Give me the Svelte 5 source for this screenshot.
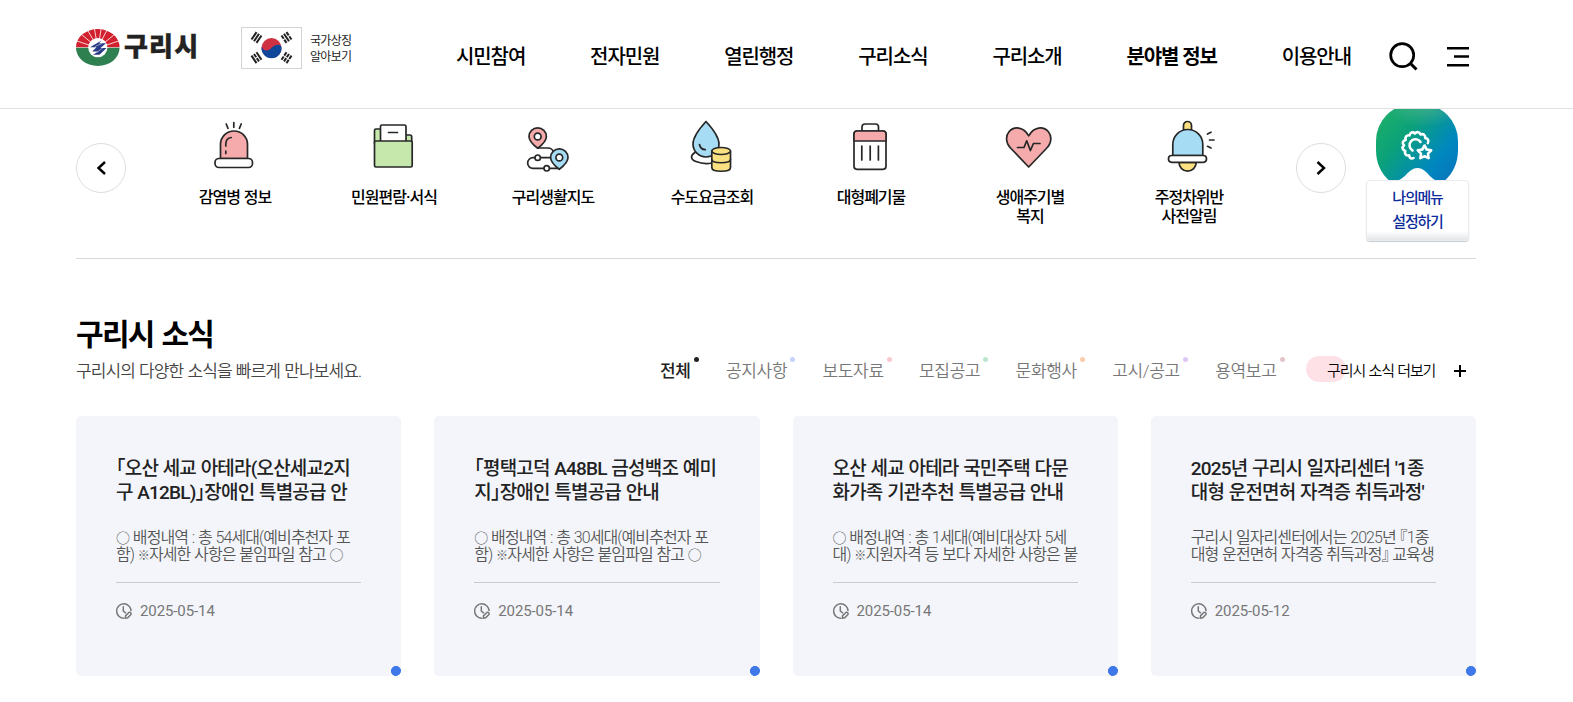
<script>
	const navItems = [
		{ label: '시민참여' },
		{ label: '전자민원' },
		{ label: '열린행정' },
		{ label: '구리소식' },
		{ label: '구리소개' },
		{ label: '분야별 정보', active: true },
		{ label: '이용안내' }
	];

	const shortcuts = [
		{ icon: 'siren', lines: ['감염병 정보'] },
		{ icon: 'folder', lines: ['민원편람·서식'] },
		{ icon: 'map', lines: ['구리생활지도'] },
		{ icon: 'water', lines: ['수도요금조회'] },
		{ icon: 'trash', lines: ['대형폐기물'] },
		{ icon: 'heart', lines: ['생애주기별', '복지'] },
		{ icon: 'bell', lines: ['주정차위반', '사전알림'] }
	];

	const tabs = [
		{ label: '전체', color: '#222222' },
		{ label: '공지사항', color: '#c5d3fb' },
		{ label: '보도자료', color: '#fac8d0' },
		{ label: '모집공고', color: '#b9e6cf' },
		{ label: '문화행사', color: '#fbcbad' },
		{ label: '고시/공고', color: '#dfc6f8' },
		{ label: '용역보고', color: '#e3c5c9' }
	];

	const news = [
		{
			title: ['「오산 세교 아테라(오산세교2지', '구 A12BL)」장애인 특별공급 안'],
			text: ['○ 배정내역 : 총 54세대(예비추천자 포', '함) ※자세한 사항은 붙임파일 참고 ○'],
			date: '2025-05-14'
		},
		{
			title: ['「평택고덕 A48BL 금성백조 예미', '지」장애인 특별공급 안내'],
			text: ['○ 배정내역 : 총 30세대(예비추천자 포', '함) ※자세한 사항은 붙임파일 참고 ○'],
			date: '2025-05-14'
		},
		{
			title: ['오산 세교 아테라 국민주택 다문', '화가족 기관추천 특별공급 안내'],
			text: ['○ 배정내역 : 총 1세대(예비대상자 5세', '대) ※지원자격 등 보다 자세한 사항은 붙'],
			date: '2025-05-14'
		},
		{
			title: ["2025년 구리시 일자리센터 '1종", "대형 운전면허 자격증 취득과정'"],
			text: ['구리시 일자리센터에서는 2025년 『1종', '대형 운전면허 자격증 취득과정』 교육생'],
			date: '2025-05-12'
		}
	];

	let current = $state('전체');

	// full-width marks are set smaller than the text around them
	function splitMarks(line) {
		return line.split(/([○※])/).filter(Boolean);
	}
</script>

<header class="header">
	<div class="inner header-inner">
		<a class="logo" href="#top">
			<svg width="44" height="38" viewBox="0 0 44 38">
				<path d="M0 18.200a21.800 18.200 0 0 1 43.600 0z" fill="#d3202f" />
				<path d="M0 18.800a21.800 18.200 0 0 0 43.600 0z" fill="#2f8050" />
				<path
					d="M21.800 19 1 12M21.800 19 5.500 5.500M21.800 19 11.500 1M21.800 19 18.300-1M21.800 19 25.300-1M21.800 19 32-1M21.800 19 38.500 5.500M21.800 19 42.600 12"
					stroke="#fff"
					stroke-width="0.800"
				/>
				<circle cx="21.800" cy="18.600" r="9.600" fill="#fff" />
				<path d="M25.500 11.500 14 18.200h6.500l-4.300 4.200h6L17 25.800h6.500l7-6.800h-6l5.500-4.800h-7z" fill="#273a86" />
				<path d="m19 17.500 7-3M21 23.300l6-4.500" fill="none" stroke="#fff" stroke-width="0.500" />
			</svg>
			<span>구리시</span>
		</a>
		<a class="symbol" href="#symbol">
			<span class="flag">
				<svg width="59" height="40" viewBox="0 0 59 40">
					<circle cx="29.500" cy="20" r="10" fill="#cf3140" />
					<path d="M19.700 18.500c1.500 4.500 6 5.500 9.800 1.500s8-4 9.900-1.500A10 10 0 1 1 19.700 18.500z" fill="#10469a" />
					<g stroke="#222" stroke-width="2">
						<g transform="translate(14.500 9.500) rotate(-56)"><path d="M-4.500-3H4.500M-4.500 0H4.500M-4.500 3H4.500" /></g>
						<g transform="translate(44.500 9.500) rotate(56)"><path d="M-4.500-3h4M.5-3h4M-4.500 0h9M-4.500 3h4M.5 3h4" /></g>
						<g transform="translate(14.500 29.700) rotate(56)"><path d="M-4.500-3h9M-4.500 0h4M.5 0h4M-4.500 3h9" /></g>
						<g transform="translate(44.500 29.700) rotate(-56)"><path d="M-4.500-3h4M.5-3h4M-4.500 0h4M.5 0h4M-4.500 3h4M.5 3h4" /></g>
					</g>
				</svg>
			</span>
			<span class="symbol-text">국가상징<br />알아보기</span>
		</a>
		<nav class="nav">
			{#each navItems as item}
				<a href="#nav" class:active={item.active}>{item.label}</a>
			{/each}
		</nav>
		<button class="icon-button search" aria-label="검색">
			<svg width="30" height="30" viewBox="0 0 30 30" fill="none" stroke="#000" stroke-width="2.700">
				<circle cx="13.200" cy="13.200" r="11.500" />
				<path d="m21 21 6.500 6.500" stroke-width="3" />
			</svg>
		</button>
		<button class="icon-button menu" aria-label="전체메뉴">
			<svg width="22" height="20" viewBox="0 0 22 20" stroke="#000" stroke-width="2.400">
				<path d="M0 1.200h22M7 9.500h15M0 18.200h22" />
			</svg>
		</button>
	</div>
</header>

<section class="inner shortcuts">
	<button class="arrow" aria-label="이전">
		<svg width="14" height="16" viewBox="0 0 14 16"><path d="m11 2-6.500 6 6.500 6" /></svg>
	</button>
	<ul class="shortcut-list">
		{#each shortcuts as item}
			<li>
				<svg class="shortcut-icon" width="60" height="60" viewBox="0 0 60 60">
					{#if item.icon === 'siren'}
						<path d="M16.500 42.500V28.500a13.500 13.500 0 0 1 27 0v14z" fill="#f5abab" />
						<rect x="11" y="42.500" width="37.500" height="9" rx="4" fill="#fff" />
						<path d="M21.800 30v-2c0-3.500 2.200-6 5.500-6.500" fill="none" />
						<path d="M21.800 35v2.500M22.200 8l1.800 4.300M29.800 6.500v4.700M37.200 8l-1.800 4.300" />
					{:else if item.icon === 'folder'}
						<path d="M11.500 27V14.500q0-1.500 1.500-1.500h5v14zM42 27v-8h5q1.700 0 1.700 1.700V27z" fill="#c6e8ad" />
						<path d="M17.500 25V10.500q0-1.500 1.500-1.500h22.500q1.500 0 1.500 1.500V25" fill="#fff" />
						<rect x="11.500" y="25" width="37.700" height="26" rx="1.500" fill="#c6e8ad" />
						<path d="M25.500 16.500h9" />
					{:else if item.icon === 'map'}
						<path d="M15.700 32H26q4 0 5.500 4M29 41.700H11a5.300 5.300 0 0 0 0 10.700h26" fill="none" />
						<path d="M15.700 32.200C10 28 7 24.500 7 20.500a8.700 8.700 0 0 1 17.400 0c0 4-3 7.500-8.700 11.700z" fill="#f5abab" />
						<path d="M37.300 53.300c-5.700-4.200-8.700-7.700-8.700-11.700a8.700 8.700 0 0 1 17.400 0c0 4-3 7.500-8.700 11.700z" fill="#a6dcf4" />
						<circle cx="15.700" cy="20.500" r="3.400" fill="#fff" />
						<circle cx="37.300" cy="41.500" r="3.400" fill="#fff" />
						<circle cx="15.700" cy="41.700" r="2.700" fill="#fff" />
						<circle cx="24.700" cy="52.300" r="2.700" fill="#fff" />
					{:else if item.icon === 'water'}
						<path d="M14 36.500c-5 3-4.500 7 1 9 5 2 11 2.500 16 1.500" fill="#fff" />
						<path d="M25 5.500C19 12 12 20 12 28a13 13 0 0 0 26 0c0-8-7-16-13-22.500z" fill="#a6dcf4" />
						<path d="M30.800 35v16.500c0 5 18.700 5 18.700 0V35z" fill="#fce182" />
						<ellipse cx="40.150" cy="35" rx="9.350" ry="3.500" fill="#fce182" />
						<path d="M30.800 43.500c0 4.300 18.700 4.300 18.700 0" fill="none" />
						<path d="M18.500 28.500c.5 3 2.500 5 5.800 5.200" fill="none" />
					{:else if item.icon === 'trash'}
						<path d="M22 15v-4q0-3 3-3h10.500q3 0 3 3v4" fill="#fff" />
						<rect x="14" y="15" width="32" height="38.300" rx="3" fill="#fff" />
						<path d="M14 25v-7q0-3 3-3h26q3 0 3 3v7z" fill="#f5abab" />
						<path d="M21.800 30v14M30.200 30v14M38.400 30v14" />
					{:else if item.icon === 'heart'}
						<path d="M29.700 51 12 32.500C6.500 27 6.500 20 10 15.800c5-6 14.500-5.300 19.700 4 5.200-9.300 14.700-10 19.700-4 3.500 4.200 3.500 11.200-2 16.700z" fill="#f5abab" />
						<path d="M18.500 31.500H25l2.700-6.700 3.700 9.700 3-7H41" fill="none" />
					{:else}
						<path d="M25.500 14V9.500a4 4 0 0 1 8 0V14z" fill="#fce182" />
						<path d="M21 46.500a8.600 8.600 0 0 0 17.200 0z" fill="#fce182" />
						<path d="M14.800 39.500V28.500a15 15 0 0 1 30 0v11z" fill="#a6dcf4" />
						<rect x="10.500" y="39.500" width="38" height="6.800" rx="3.200" fill="#fff" />
						<path d="m49.500 18 3.500-1.800M51.500 24H56M49.500 30.300l3.500 1.800" />
					{/if}
				</svg>
				<span>{item.lines[0]}{#if item.lines[1]}<br />{item.lines[1]}{/if}</span>
			</li>
		{/each}
	</ul>
	<button class="arrow next" aria-label="다음">
		<svg width="14" height="16" viewBox="0 0 14 16"><path d="m3.500 2 6.500 6-6.500 6" /></svg>
	</button>
	<a class="my-menu" href="#mymenu">
		<svg class="blob" width="82" height="77" viewBox="0 0 82 77">
			<defs>
				<linearGradient id="blob-fill" x1="0" y1="0.100" x2="1" y2="0.850">
					<stop offset="0" stop-color="#1fb168" />
					<stop offset="0.350" stop-color="#0ca278" />
					<stop offset="0.780" stop-color="#0087bf" />
					<stop offset="1" stop-color="#0877bd" />
				</linearGradient>
				<radialGradient id="blob-shine" cx="0.600" cy="0" r="0.500">
					<stop offset="0" stop-color="#63b59a" stop-opacity="0.600" />
					<stop offset="1" stop-color="#63b59a" stop-opacity="0" />
				</radialGradient>
			</defs>
			<path d="M0 37A37 37 0 0 1 37 0h8a37 37 0 0 1 37 37v9c0 13-5 23-13 30.500H62c-8 0-11-12.500-20.500-12.500S29 76.500 20 76.500h-7C5 69 0 59 0 46z" fill="url(#blob-fill)" />
			<path d="M0 37A37 37 0 0 1 37 0h8a37 37 0 0 1 37 37v9H0z" fill="url(#blob-shine)" />
			<g fill="none" stroke="#fff" stroke-width="2.600" stroke-linecap="round" stroke-linejoin="round">
				<path d="M37.500 54c-2 1.200-4.200 0-4.400-2.600-3.200.6-5-1.700-3.800-4.500-3-.8-3.700-3.600-1.300-5.500-2.200-2.200-1.300-4.900 1.700-5.500-1-2.900.9-5 3.900-4.500.4-3 3.200-3.900 5.300-1.900 1.900-2.300 4.900-1.600 5.600 1 2.900-1.200 5 .6 4.800 3.600 2.800.3 3.900 2.600 2.500 5" />
				<path d="M36.500 46.500a6 6 0 1 1 8-8.500" />
				<path d="m48.500 41.500 2.200 4 4.500.8-3.200 3.300.6 4.600-4.100-2-4.100 2 .6-4.600-3.200-3.300 4.500-.8z" />
			</g>
		</svg>
		<span class="my-menu-text">나의메뉴<br />설정하기</span>
	</a>
</section>

<section class="inner news">
	<h2>구리시 소식</h2>
	<div class="news-head">
		<p>구리시의 다양한 소식을 빠르게 만나보세요.</p>
		<div class="tabs">
			{#each tabs as tab}
				<button class:on={current === tab.label} onclick={() => (current = tab.label)}>
					{tab.label}
					<i style="background: {tab.color}"></i>
				</button>
			{/each}
		</div>
		<a class="more" href="#more">
			<span>구리시 소식 더보기</span>
			<svg width="12" height="12" viewBox="0 0 12 12"><path d="M0 6h12M6 0v12" stroke="#000" stroke-width="2" /></svg>
		</a>
	</div>
	<div class="cards">
		{#each news as item}
			<article class="card">
				<h3>{item.title[0]}<br />{item.title[1]}</h3>
				<div class="summary">
					{#each item.text as line}
						<p>{#each splitMarks(line) as part}<span class:circle={part === '○'} class:note={part === '※'}>{part}</span>{/each}</p>
					{/each}
				</div>
				<div class="date">
					<svg width="16" height="16" viewBox="0 0 16 16" fill="none" stroke="#777" stroke-width="1.500" stroke-linecap="round">
						<path d="M7.500 15.200A7.200 7.200 0 1 1 15 7.600M7.300 3.800V8l2.200 1.800" />
						<path d="m9.300 15.200.3-2.500 3-3q1-.8 2 .1t.1 2l-3 3z" />
					</svg>
					<span>{item.date}</span>
				</div>
			</article>
		{/each}
	</div>
</section>

<style>
	:global(body) {
		margin: 0;
		background: #fff;
		color: #000;
		font-family: Roboto, 'Noto Sans CJK KR', sans-serif;
		overflow: hidden;
	}

	a {
		color: inherit;
		text-decoration: none;
	}

	button {
		padding: 0;
		border: 0;
		background: none;
		font-family: inherit;
		cursor: pointer;
	}

	svg {
		display: block;
		flex: none;
	}

	.inner {
		width: 1400px;
		margin-left: 76px;
		box-sizing: border-box;
	}

	.header {
		height: 108px;
		border-bottom: 1px solid #e1e1e1;
	}

	.header-inner {
		display: flex;
		align-items: flex-start;
		white-space: nowrap;
	}

	.logo {
		display: flex;
		width: 165px;
		padding-top: 28.500px;
	}

	.logo span {
		margin: 0 0 0 4px;
		font-size: 26px;
		font-weight: 900;
		line-height: 37px;
		letter-spacing: 1.200px;
		color: #222;
		-webkit-text-stroke: 0.400px #222;
	}

	.symbol {
		display: flex;
		width: 140px;
		padding-top: 27px;
	}

	.flag {
		height: 40px;
		border: 1px solid #d3d3d3;
	}

	.symbol-text {
		margin: 6px 0 0 8px;
		font-size: 12px;
		line-height: 16px;
		letter-spacing: -0.700px;
		color: #222;
	}

	.nav {
		display: flex;
		justify-content: space-between;
		width: 895px;
		margin: 0 0 0 75px;
		padding-top: 42px;
		font-size: 20px;
		font-weight: 500;
		line-height: 30px;
		letter-spacing: -1.100px;
	}

	.nav .active {
		font-weight: 700;
	}

	.search {
		margin: 42px 0 0 38px;
	}

	.menu {
		margin: 47px 0 0 28px;
	}

	.shortcuts {
		display: flex;
		align-items: flex-start;
		height: 150px;
		border-bottom: 1px solid #d9d9d9;
		overflow: hidden;
	}

	.arrow {
		display: flex;
		align-items: center;
		justify-content: center;
		flex: none;
		width: 50px;
		height: 50px;
		margin-top: 34px;
		border: 1px solid #ddd;
		border-radius: 50%;
	}

	.arrow path {
		fill: none;
		stroke: #000;
		stroke-width: 2.400;
	}

	.shortcut-list {
		display: flex;
		flex: none;
		margin: 0 28px 0 29px;
		padding: 7px 0 0;
		list-style: none;
	}

	.shortcut-list li {
		display: flex;
		flex-direction: column;
		align-items: center;
		width: 159px;
	}

	.shortcut-list span {
		margin: 12px 0 0 1px;
		font-size: 16px;
		font-weight: 500;
		line-height: 19px;
		letter-spacing: -1px;
		word-spacing: 1px;
		text-align: center;
	}

	.shortcut-icon {
		margin-right: 1px;
		stroke: #272727;
		stroke-width: 1.700;
		stroke-linecap: round;
		stroke-linejoin: round;
	}

	.my-menu {
		display: flex;
		flex-direction: column;
		align-items: center;
		flex: none;
		width: 103px;
		margin: -5px 0 0 20px;
	}

	.blob {
		margin-right: 2px;
	}

	.my-menu-text {
		width: 101px;
		height: 54px;
		margin-top: -1px;
		padding-top: 5px;
		border: 1px solid #e8ebef;
		border-radius: 4px;
		background: linear-gradient(#fff 85%, #e4e6e8);
		box-shadow: 0 1px 1px #c8cccd;
		font-size: 15px;
		font-weight: 500;
		line-height: 24px;
		letter-spacing: -1.200px;
		text-align: center;
		color: #0d2c9c;
	}

	.news {
		padding-top: 53px;
	}

	h2 {
		margin: 0;
		font-size: 30px;
		line-height: 46px;
		letter-spacing: -1.700px;
		word-spacing: 2px;
	}

	.news-head {
		display: flex;
		height: 28px;
		margin-top: -1px;
		white-space: nowrap;
		line-height: 28px;
	}

	.news-head p {
		width: 584px;
		margin: 0;
		font-size: 17px;
		font-weight: 350;
		letter-spacing: -0.900px;
		word-spacing: 0.900px;
		color: #444;
	}

	.tabs {
		display: flex;
		gap: 35.200px;
		width: 646px;
	}

	.tabs button {
		position: relative;
		font-size: 17px;
		font-weight: 350;
		line-height: 28px;
		letter-spacing: -0.300px;
		color: #777;
	}

	.tabs .on {
		font-weight: 500;
		color: #222;
	}

	.tabs i {
		position: absolute;
		top: 0;
		right: -8px;
		width: 5px;
		height: 5px;
		border-radius: 50%;
	}

	.more {
		position: relative;
		display: flex;
		align-items: center;
		justify-content: space-between;
		width: 139px;
		height: 28px;
		padding-left: 21px;
		font-size: 15px;
		font-weight: 350;
		letter-spacing: -1.100px;
		word-spacing: 0.800px;
	}

	.more::before {
		content: '';
		position: absolute;
		left: 0;
		top: -1px;
		z-index: -1;
		width: 40px;
		height: 26px;
		border-radius: 13px;
		background: #fee1e6;
	}

	.cards {
		display: grid;
		grid-template-columns: repeat(4, minmax(0, 1fr));
		gap: 33px;
		margin-top: 31px;
	}

	.card {
		height: 260px;
		box-sizing: border-box;
		padding: 41px 40px 0;
		border-radius: 5px;
		background: radial-gradient(circle at calc(100% - 5px) calc(100% - 5px), #3f78e8 4.700px, #f3f5fa 5.300px);
		font-feature-settings: 'halt';
		white-space: nowrap;
	}

	.card h3 {
		margin: 0;
		font-size: 19px;
		font-weight: 500;
		line-height: 24px;
		letter-spacing: -0.800px;
		word-spacing: 0.700px;
		color: #222;
	}

	.summary {
		margin-top: 24px;
		padding-bottom: 19px;
		border-bottom: 1px solid #c9cbd0;
		font-size: 16px;
		font-weight: 350;
		letter-spacing: -0.900px;
		word-spacing: 0.700px;
		color: #555;
	}

	.summary p {
		height: 17px;
		margin: 0;
		line-height: 17px;
	}

	.circle {
		font-size: 14px;
		line-height: 1;
	}

	.note {
		font-size: 12px;
		line-height: 1;
	}

	.date {
		display: flex;
		align-items: center;
		gap: 8px;
		margin-top: 19px;
		font-size: 15px;
		line-height: 17px;
		letter-spacing: -0.100px;
		color: #777;
	}

	.date span {
		padding-top: 1px;
	}
</style>
